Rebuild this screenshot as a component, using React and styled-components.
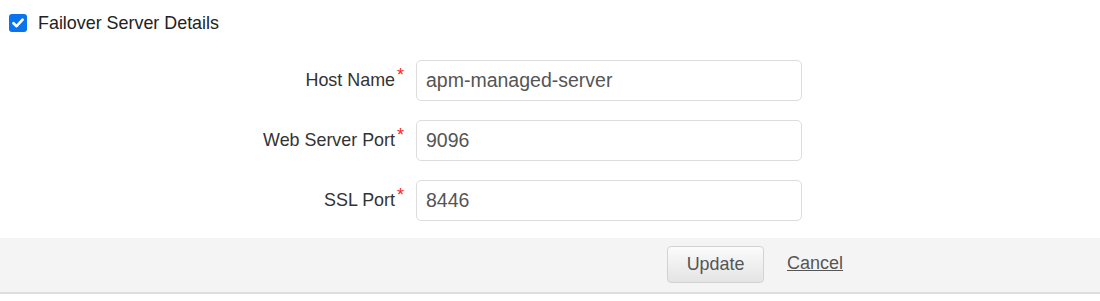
import React from 'react';
import styled, { createGlobalStyle } from 'styled-components';

const GlobalStyle = createGlobalStyle`
  body {
    margin: 0;
    background: #fff;
    font-family: "Liberation Sans", Arial, sans-serif;
    color: #333;
  }
`;

const Page = styled.div`
  width: 1100px;
`;

const SectionHeader = styled.label`
  display: flex;
  align-items: center;
  gap: 11px;
  padding: 14px 0 0 9px;
  height: 18px;
  font-size: 17.9px;
  color: #222;
  cursor: pointer;
`;

const HiddenInput = styled.input`
  display: none;
`;

const CheckBox = styled.span`
  display: flex;
  align-items: center;
  justify-content: center;
  width: 18px;
  height: 18px;
  border-radius: 3px;
  background: ${(p) => (p.$checked ? '#0a74ee' : '#fff')};
  border: ${(p) => (p.$checked ? 'none' : '1px solid #767676')};
`;

const Form = styled.div`
  display: grid;
  grid-template-columns: 404px 386px;
  column-gap: 12px;
  row-gap: 19px;
  margin-top: 28px;
`;

const Label = styled.div`
  display: flex;
  justify-content: flex-end;
  align-items: center;
  font-size: 17.9px;
  color: #333;
`;

const Required = styled.span`
  color: #f0281e;
  font-size: 18px;
  align-self: flex-start;
  margin-top: 6px;
  margin-left: 2px;
  line-height: 1;
`;

const Field = styled.input`
  box-sizing: border-box;
  height: 41px;
  width: 100%;
  margin: 0;
  padding: 0 9px;
  border: 1px solid #ddd;
  border-radius: 5px;
  font-family: "Liberation Sans", Arial, sans-serif;
  font-size: 19.5px;
  color: #555;
  outline: none;
`;

const Footer = styled.div`
  display: flex;
  align-items: center;
  gap: 23px;
  margin-top: 17px;
  height: 54px;
  padding-left: 667px;
  background: #f4f4f4;
  border-bottom: 2px solid #dedede;
`;

const Button = styled.button`
  height: 37px;
  width: 97px;
  margin-bottom: 1px;
  border: 1px solid #d2d2d2;
  border-radius: 4px;
  background: linear-gradient(#fbfbfb, #e4e4e4);
  font-family: "Liberation Sans", Arial, sans-serif;
  font-size: 17.9px;
  color: #555;
  cursor: pointer;
`;

const LinkButton = styled.a`
  margin-top: -3px;
  font-size: 18px;
  color: #555;
  text-decoration: underline;
  cursor: pointer;
`;

const fields = [
  { label: 'Host Name', value: 'apm-managed-server' },
  { label: 'Web Server Port', value: '9096' },
  { label: 'SSL Port', value: '8446' },
];

export default function App() {
  const [checked, setChecked] = React.useState(true);
  return (
    <Page>
      <GlobalStyle />
      <SectionHeader>
        <HiddenInput type="checkbox" checked={checked} onChange={() => setChecked(!checked)} />
        <CheckBox $checked={checked}>
          {checked && (
            <svg width="12" height="10" viewBox="0 0 12 10">
              <path d="M1.5 5.2 L4.6 8.2 L10.6 1.6" fill="none" stroke="#fff" strokeWidth="2.6" strokeLinecap="round" strokeLinejoin="round" />
            </svg>
          )}
        </CheckBox>
        Failover Server Details
      </SectionHeader>
      <Form>
        {fields.map((f) => (
          <React.Fragment key={f.label}>
            <Label>
              {f.label}
              <Required>*</Required>
            </Label>
            <Field defaultValue={f.value} />
          </React.Fragment>
        ))}
      </Form>
      <Footer>
        <Button>Update</Button>
        <LinkButton>Cancel</LinkButton>
      </Footer>
    </Page>
  );
}
